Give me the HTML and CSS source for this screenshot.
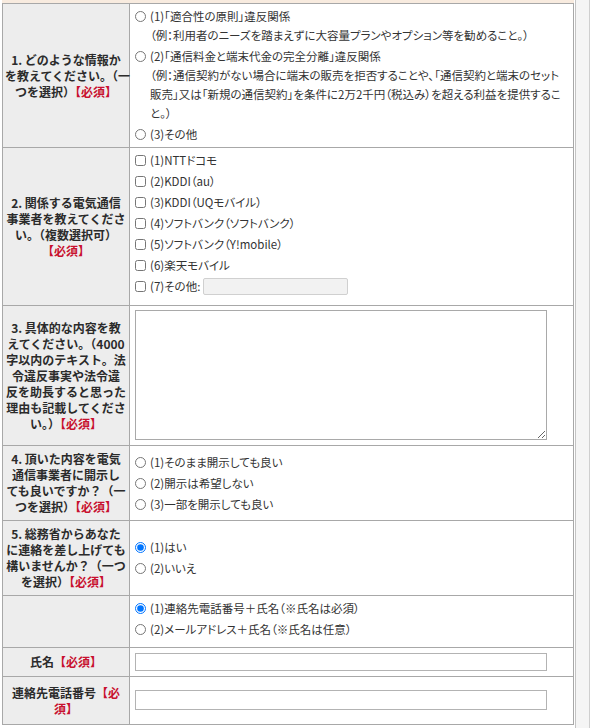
FILE: index.html
```html
<!DOCTYPE html>
<html lang="ja">
<head>
    <meta charset="UTF-8">
    <meta name="viewport" content="width=device-width, initial-scale=1.0">
    <title>情報提供フォーム</title>
    <link rel="stylesheet" href="styles.css">
</head>
<body>

<div class="page">
    <div class="form-wrap">
        <div class="form-top"></div>
        <table class="form-table">
            <!-- 1. 情報の種類 -->
            <tr>
                <th class="label">1. どのような情報か<br>を教えてください。（一<br>つを選択）<span class="req">【必須】</span></th>
                <td class="field">
                    <label class="option"><input type="radio" name="kind"><span>(1)「適合性の原則」違反関係<br>（例：利用者のニーズを踏まえずに大容量プランやオプション等を勧めること。）</span></label>
                    <label class="option"><input type="radio" name="kind"><span>(2)「通信料金と端末代金の完全分離」違反関係<br>（例：通信契約がない場合に端末の販売を拒否することや、「通信契約と端末のセット<br>販売」又は「新規の通信契約」を条件に2万2千円（税込み）を超える利益を提供するこ<br>と。）</span></label>
                    <label class="option"><input type="radio" name="kind"><span>(3)その他</span></label>
                </td>
            </tr>

            <!-- 2. 事業者 -->
            <tr>
                <th class="label">2. 関係する電気通信<br>事業者を教えてくださ<br>い。（複数選択可）<br><span class="req">【必須】</span></th>
                <td class="field field-carriers">
                    <label class="option"><input type="checkbox"><span>(1)NTTドコモ</span></label>
                    <label class="option"><input type="checkbox"><span>(2)KDDI（au）</span></label>
                    <label class="option"><input type="checkbox"><span>(3)KDDI（UQモバイル）</span></label>
                    <label class="option"><input type="checkbox"><span>(4)ソフトバンク（ソフトバンク）</span></label>
                    <label class="option"><input type="checkbox"><span>(5)ソフトバンク（Y!mobile）</span></label>
                    <label class="option"><input type="checkbox"><span>(6)楽天モバイル</span></label>
                    <label class="option"><input type="checkbox"><span>(7)その他:</span><input type="text" class="other-input" disabled></label>
                </td>
            </tr>

            <!-- 3. 内容 -->
            <tr>
                <th class="label">3. 具体的な内容を教<br>えてください。（4000<br>字以内のテキスト。法<br>令違反事実や法令違<br>反を助長すると思った<br>理由も記載してくださ<br>い。）<span class="req">【必須】</span></th>
                <td class="field field-text">
                    <textarea class="detail"></textarea>
                </td>
            </tr>

            <!-- 4. 開示 -->
            <tr>
                <th class="label">4. 頂いた内容を電気<br>通信事業者に開示し<br>ても良いですか？（一<br>つを選択）<span class="req">【必須】</span></th>
                <td class="field">
                    <label class="option"><input type="radio" name="disclose"><span>(1)そのまま開示しても良い</span></label>
                    <label class="option"><input type="radio" name="disclose"><span>(2)開示は希望しない</span></label>
                    <label class="option"><input type="radio" name="disclose"><span>(3)一部を開示しても良い</span></label>
                </td>
            </tr>

            <!-- 5. 連絡 -->
            <tr>
                <th class="label">5. 総務省からあなた<br>に連絡を差し上げても<br>構いませんか？（一つ<br>を選択）<span class="req">【必須】</span></th>
                <td class="field">
                    <label class="option"><input type="radio" name="contact" checked><span>(1)はい</span></label>
                    <label class="option"><input type="radio" name="contact"><span>(2)いいえ</span></label>
                </td>
            </tr>

            <tr>
                <th class="label"></th>
                <td class="field field-method">
                    <label class="option"><input type="radio" name="method" checked><span>(1)連絡先電話番号＋氏名（※氏名は必須）</span></label>
                    <label class="option"><input type="radio" name="method"><span>(2)メールアドレス＋氏名（※氏名は任意）</span></label>
                </td>
            </tr>

            <tr>
                <th class="label">氏名<span class="req">【必須】</span></th>
                <td class="field field-input">
                    <input type="text" class="text-input">
                </td>
            </tr>

            <tr>
                <th class="label">連絡先電話番号<span class="req">【必<br>須】</span></th>
                <td class="field field-input field-phone">
                    <input type="text" class="text-input text-input-tall">
                </td>
            </tr>
        </table>
    </div>
    <div class="side-rail"></div>
</div>

</body>
</html>
```

FILE: styles.css
```css
body {
    margin: 0;
    background-color: #fff;
    color: #333;
    font-family: "Noto Sans CJK JP", "Noto Sans", sans-serif;
    font-size: 12px;
}

.page {
    display: flex;
    height: 728px;
    overflow: hidden;
}

.form-wrap {
    width: 572px;
    margin-left: 2px;
}

/* 上の見出し行の下端 */
.form-top {
    height: 3px;
    background-color: #f8ebdf;
}

.form-table {
    width: 572px;
    border-collapse: collapse;
    table-layout: fixed;
}

.form-table th,
.form-table td {
    border: 1px solid #a8a8a8;
}

/* 項目名 */
.label {
    width: 122px;
    padding: 5px 2px;
    background-color: #ededed;
    color: #2b2b2b;
    font-weight: 700;
    font-size: 12px;
    line-height: 16px;
    text-align: center;
    vertical-align: middle;
    white-space: nowrap;
}

.req {
    color: #c8102e;
}

/* 入力欄 */
.field {
    padding: 3px 5px;
    vertical-align: middle;
    background-color: #fff;
    font-size: 11.5px;
    line-height: 19px;
    font-feature-settings: "palt";
}

.field-carriers {
    padding-bottom: 9px;
}

.field-text {
    padding: 4px 5px 5px;
}

.field-method {
    padding: 3px 5px 8px;
}

.field-input {
    padding: 5px 5px;
}

.field-phone {
    padding: 13px 5px 14px;
}

.option {
    display: flex;
    align-items: flex-start;
    margin-bottom: 2px;
    white-space: nowrap;
}

.option:last-child {
    margin-bottom: 0;
}

.option input[type="radio"],
.option input[type="checkbox"] {
    width: 11px;
    height: 11px;
    margin: 4px 4px 0 0;
    flex: none;
}

.other-input {
    width: 145px;
    height: 17px;
    margin: 1px 0 0 3px;
    box-sizing: border-box;
    border: 1px solid #d0d0d0;
    border-radius: 2px;
    background-color: #f2f2f2;
}

.detail {
    display: block;
    width: 412px;
    height: 130px;
    box-sizing: border-box;
    border: 1px solid #a9a9a9;
    margin: 0;
}

.text-input {
    display: block;
    width: 412px;
    height: 18px;
    box-sizing: border-box;
    border: 1px solid #b3b3b3;
    margin: 0;
}

.text-input-tall {
    height: 20px;
}

/* 右側の枠 */
.side-rail {
    width: 13px;
    margin-left: 1px;
    border-left: 1px solid #c4c4c4;
    border-right: 1px solid #cfcfcf;
    background-color: #f5f5f5;
}
```
